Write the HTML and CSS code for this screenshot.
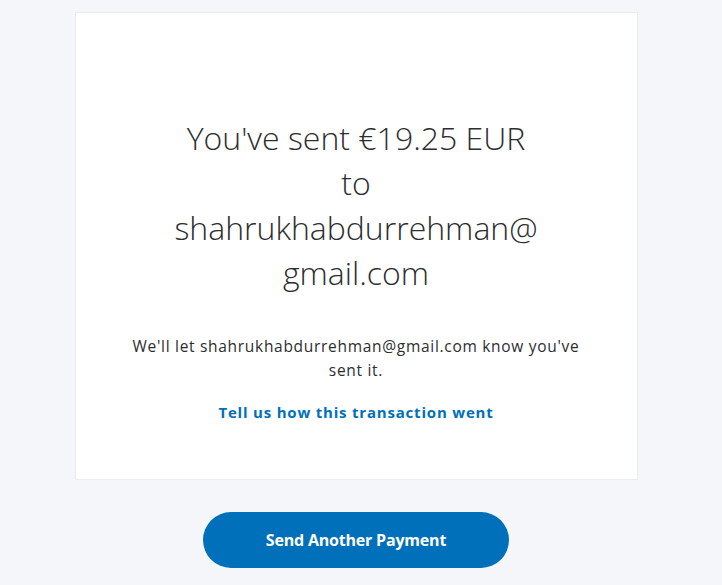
FILE: index.html
```html
<!DOCTYPE html>
<html lang="en">
<head>
<meta charset="utf-8">
<title>Payment sent</title>
<link rel="stylesheet" href="styles.css">
</head>
<body>
<main class="page">
  <section class="card">
    <h1 class="headline">You've sent €19.25 EUR to shahrukhabdurrehman@<wbr>gmail.com</h1>
    <p class="note">We'll let shahrukhabdurrehman@gmail.com know you've sent it.</p>
    <a class="feedback" href="#">Tell us how this transaction went</a>
  </section>
  <button class="primary" type="button">Send Another Payment</button>
</main>
</body>
</html>
```
FILE: styles.css
```css
html, body {
  margin: 0;
  padding: 0;
  background: #f5f6fa;
}
body {
  font-family: "Open Sans", "Noto Sans", sans-serif;
  color: #2c2e2f;
}
.page {
  display: flex;
  flex-direction: column;
  align-items: center;
  padding: 12px 10px 0 0;
}
.card {
  box-sizing: border-box;
  width: 563px;
  height: 468px;
  background: #ffffff;
  border: 1px solid #eaeced;
  display: flex;
  flex-direction: column;
  align-items: center;
  padding: 102px 40px 0;
  text-align: center;
}
.headline {
  margin: 0;
  width: 370px;
  font-family: "Open Sans", sans-serif;
  font-weight: 300;
  font-size: 32px;
  line-height: 45px;
  color: #2c2e2f;
  overflow-wrap: break-word;
}
.note {
  margin: 39px 0 0;
  width: 470px;
  font-size: 15.5px;
  letter-spacing: 0.7px;
  line-height: 24px;
  color: #2c2e2f;
}
.feedback {
  margin-top: 18px;
  font-size: 15px;
  font-weight: 700;
  letter-spacing: 0.8px;
  color: #0070ba;
  text-decoration: none;
  line-height: 24px;
}
.primary {
  margin-top: 32px;
  width: 306px;
  height: 56px;
  border: none;
  border-radius: 28px;
  background: #0070ba;
  color: #ffffff;
  font-family: "Open Sans", "Noto Sans", sans-serif;
  font-weight: 700;
  font-size: 16px;
  letter-spacing: -0.2px;
  cursor: pointer;
}
```
